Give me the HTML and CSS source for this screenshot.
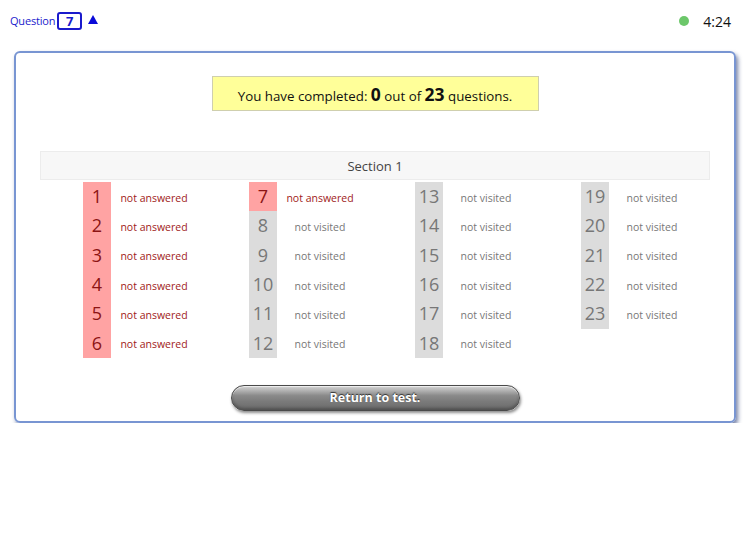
FILE: index.html
```html
<!DOCTYPE html>
<html>
<head>
<meta charset="utf-8">
<link rel="stylesheet" href="styles.css">
</head>
<body>
<header class="topbar">
  <div class="qnav">
    <span class="qlabel">Question</span>
    <span class="qnum">7</span>
    <svg class="qarrow" width="10" height="9" viewBox="0 0 10 9"><polygon points="5,0 10,9 0,9" fill="#0a0ad8"/></svg>
  </div>
  <div class="status">
    <span class="dot"></span>
    <span class="clock">4:24</span>
  </div>
</header>
<main class="card">
  <div class="summary"><span>You have completed:&nbsp;<b class="big">0</b> out of <b class="big">23</b> questions.</span></div>
  <div class="section-head">Section 1</div>
  <div class="grid">
    <div class="item ans"><span class="num">1</span><span class="lbl">not answered</span></div>
    <div class="item ans"><span class="num">2</span><span class="lbl">not answered</span></div>
    <div class="item ans"><span class="num">3</span><span class="lbl">not answered</span></div>
    <div class="item ans"><span class="num">4</span><span class="lbl">not answered</span></div>
    <div class="item ans"><span class="num">5</span><span class="lbl">not answered</span></div>
    <div class="item ans"><span class="num">6</span><span class="lbl">not answered</span></div>
    <div class="item ans"><span class="num">7</span><span class="lbl">not answered</span></div>
    <div class="item"><span class="num">8</span><span class="lbl">not visited</span></div>
    <div class="item"><span class="num">9</span><span class="lbl">not visited</span></div>
    <div class="item"><span class="num">10</span><span class="lbl">not visited</span></div>
    <div class="item"><span class="num">11</span><span class="lbl">not visited</span></div>
    <div class="item"><span class="num">12</span><span class="lbl">not visited</span></div>
    <div class="item"><span class="num">13</span><span class="lbl">not visited</span></div>
    <div class="item"><span class="num">14</span><span class="lbl">not visited</span></div>
    <div class="item"><span class="num">15</span><span class="lbl">not visited</span></div>
    <div class="item"><span class="num">16</span><span class="lbl">not visited</span></div>
    <div class="item"><span class="num">17</span><span class="lbl">not visited</span></div>
    <div class="item"><span class="num">18</span><span class="lbl">not visited</span></div>
    <div class="item"><span class="num">19</span><span class="lbl">not visited</span></div>
    <div class="item"><span class="num">20</span><span class="lbl">not visited</span></div>
    <div class="item"><span class="num">21</span><span class="lbl">not visited</span></div>
    <div class="item"><span class="num">22</span><span class="lbl">not visited</span></div>
    <div class="item"><span class="num">23</span><span class="lbl">not visited</span></div>
  </div>
  <div class="btn-row"><button class="return-btn">Return to test.</button></div>
</main>
</body>
</html>
```
FILE: styles.css
```css
html, body {
  margin: 0;
  padding: 0;
  background: #fff;
  font-family: "Open Sans", "Liberation Sans", sans-serif;
}
.topbar {
  height: 42px;
  display: flex;
  justify-content: space-between;
  align-items: center;
  padding: 0 19px 0 10px;
  box-sizing: border-box;
}
.qnav {
  display: flex;
  align-items: center;
  color: #1a1acc;
  margin-top: -1px;
}
.qlabel {
  font-size: 11px;
  letter-spacing: -0.2px;
}
.qnum {
  display: inline-block;
  width: 21px;
  height: 14px;
  line-height: 14px;
  border: 2px solid #1a1acc;
  border-radius: 3px;
  text-align: center;
  font-size: 13px;
  font-weight: 700;
  margin-left: 2px;
}
.qarrow {
  display: block;
  margin-left: 6px;
  margin-top: -2px;
}
.status {
  display: flex;
  align-items: center;
}
.dot {
  width: 10px;
  height: 10px;
  border-radius: 50%;
  background: #6cc76a;
  margin-right: 14px;
  margin-top: -1px;
}
.clock {
  font-size: 14px;
  color: #111;
}
.card {
  margin: 9px 0 0 14px;
  width: 722px;
  height: 372px;
  box-sizing: border-box;
  border: 2px solid #7895d2;
  border-radius: 6px;
  box-shadow: 2px 3px 4px rgba(30, 50, 110, 0.6);
  display: flex;
  flex-direction: column;
  align-items: center;
  padding-top: 23px;
}
.summary {
  width: 327px;
  height: 35px;
  box-sizing: border-box;
  background: #ffff99;
  border: 1px solid #cfcfae;
  display: flex;
  align-items: center;
  justify-content: center;
  font-size: 13.3px;
  color: #111;
}
.big {
  font-size: 17.5px;
  font-weight: 700;
}
.section-head {
  align-self: stretch;
  margin: 40px 24px 0 24px;
  height: 29px;
  box-sizing: border-box;
  background: #f7f7f7;
  border: 1px solid #ececec;
  display: flex;
  align-items: center;
  justify-content: center;
  font-size: 13px;
  color: #444;
}
.grid {
  align-self: stretch;
  padding-left: 67px;
  margin-top: 2px;
  display: grid;
  grid-auto-flow: column;
  grid-template-rows: repeat(6, 29.33px);
  grid-template-columns: repeat(4, 166px);
}
.item {
  display: flex;
  align-items: stretch;
}
.num {
  width: 28px;
  background: #dcdcdc;
  color: #777;
  font-size: 18px;
  display: flex;
  align-items: center;
  justify-content: center;
  padding-bottom: 1px;
}
.lbl {
  width: 86px;
  display: flex;
  align-items: center;
  justify-content: center;
  font-size: 10.5px;
  color: #777;
  padding-top: 2px;
}
.ans .num {
  background: #ffa3a3;
  color: #8c1414;
}
.ans .lbl {
  color: #a01a1a;
}
.btn-row {
  margin-top: 27px;
}
.return-btn {
  width: 289px;
  height: 26px;
  border-radius: 13px;
  border: 1px solid #4a4a4a;
  background: linear-gradient(to bottom, #d2d2d2 0%, #b4b4b4 18%, #8a8a8a 40%, #7a7a7a 65%, #6a6a6a 100%);
  box-shadow: inset 0 1px 1px rgba(255,255,255,0.7), inset 0 -2px 3px rgba(0,0,0,0.25), 1px 2px 3px rgba(0,0,0,0.45);
  color: #fff;
  font-family: "Open Sans", "Liberation Sans", sans-serif;
  font-weight: 700;
  font-size: 12.5px;
  text-shadow: 0 -1px 1px rgba(0,0,0,0.7);
  padding: 0;
}
```
